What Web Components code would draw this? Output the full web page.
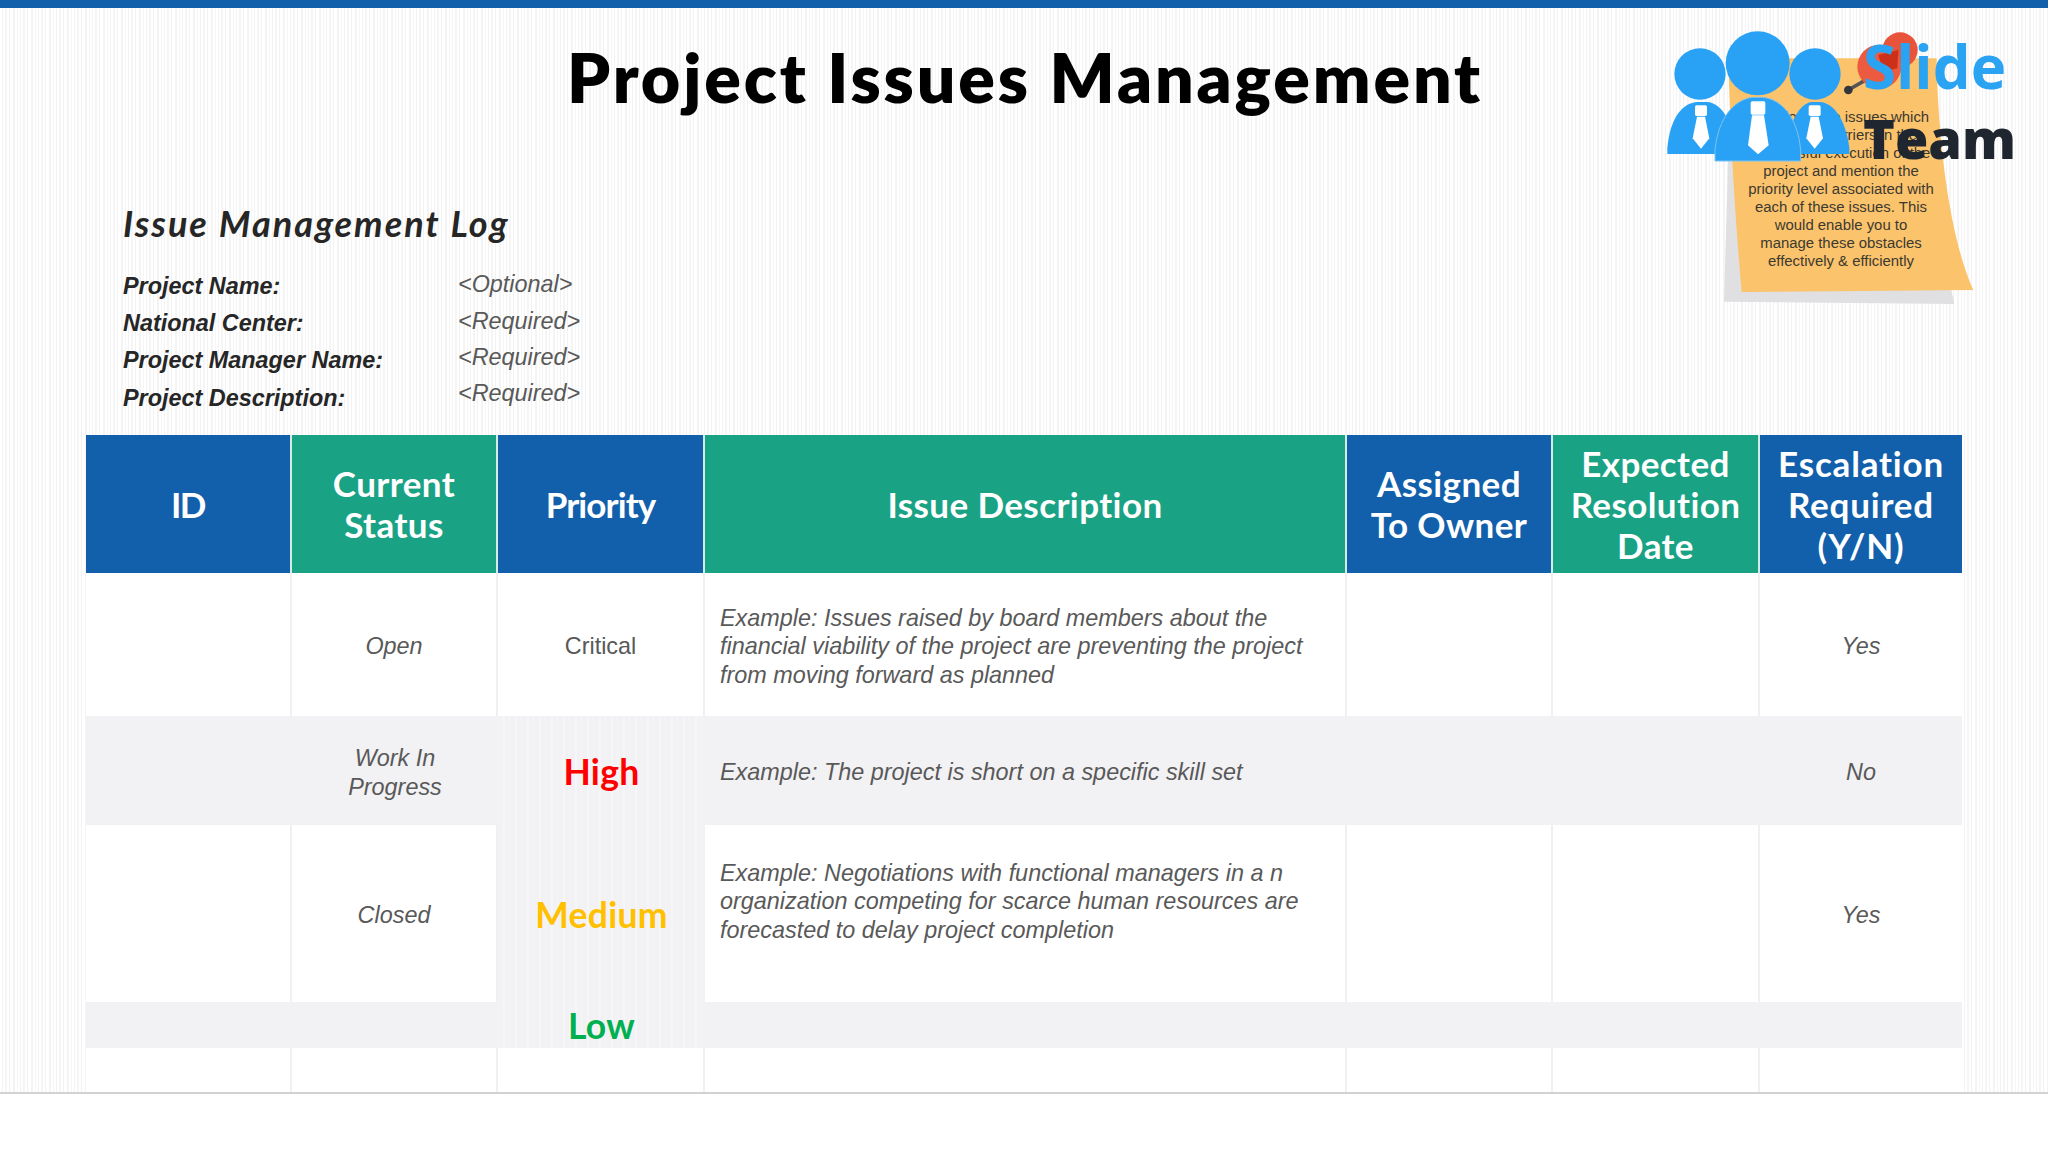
<!DOCTYPE html>
<html lang="en">
<head>
<meta charset="utf-8">
<title>Project Issues Management</title>
<style>
  html,body{margin:0;padding:0;background:#fff}
  body{width:2048px;height:1152px;overflow:hidden;font-family:"Liberation Sans",sans-serif}
</style>
</head>
<body>
<issue-slide>
  <slide-title>Project Issues Management</slide-title>
  <log-info heading="Issue Management Log">
    <info-row label="Project Name:" off="-4">&lt;Optional&gt;</info-row>
    <info-row label="National Center:" off="-4">&lt;Required&gt;</info-row>
    <info-row label="Project Manager Name:" off="-6.6">&lt;Required&gt;</info-row>
    <info-row label="Project Description:" off="-9.2">&lt;Required&gt;</info-row>
  </log-info>
  <issue-table>
    <t-cell kind="hb" ls="-1.6">ID</t-cell>
    <t-cell kind="ht">Current<br>Status</t-cell>
    <t-cell kind="hb" ls="-.9">Priority</t-cell>
    <t-cell kind="ht">Issue Description</t-cell>
    <t-cell kind="hb">Assigned<br>To Owner</t-cell>
    <t-cell kind="ht">Expected<br>Resolution<br>Date</t-cell>
    <t-cell kind="hb" last ls=".8">Escalation<br>Required<br>(Y/N)</t-cell>

    <t-cell kind="w"></t-cell>
    <t-cell kind="w" em>Open</t-cell>
    <t-cell kind="w">Critical</t-cell>
    <t-cell kind="w" em desc>Example: Issues raised by board members about the<br>financial viability of the project are preventing the project<br>from moving forward as planned</t-cell>
    <t-cell kind="w"></t-cell>
    <t-cell kind="w"></t-cell>
    <t-cell kind="w" em last>Yes</t-cell>

    <t-cell kind="g"></t-cell>
    <t-cell kind="g" em>Work In<br>Progress</t-cell>
    <t-cell kind="gs" pri="#ff0000">High</t-cell>
    <t-cell kind="g" em desc>Example: The project is short on a specific skill set</t-cell>
    <t-cell kind="g"></t-cell>
    <t-cell kind="g"></t-cell>
    <t-cell kind="g" em last>No</t-cell>

    <t-cell kind="w"></t-cell>
    <t-cell kind="w" em>Closed</t-cell>
    <t-cell kind="gs" pri="#ffc000">Medium</t-cell>
    <t-cell kind="w" em desc top>Example: Negotiations with functional managers in a n<br>organization competing for scarce human resources are<br>forecasted to delay project completion</t-cell>
    <t-cell kind="w"></t-cell>
    <t-cell kind="w"></t-cell>
    <t-cell kind="w" em last>Yes</t-cell>

    <t-cell kind="g"></t-cell>
    <t-cell kind="g"></t-cell>
    <t-cell kind="gs" pri="#00b050">Low</t-cell>
    <t-cell kind="g"></t-cell>
    <t-cell kind="g"></t-cell>
    <t-cell kind="g"></t-cell>
    <t-cell kind="g" last></t-cell>

    <t-cell kind="w"></t-cell>
    <t-cell kind="w"></t-cell>
    <t-cell kind="w"></t-cell>
    <t-cell kind="w"></t-cell>
    <t-cell kind="w"></t-cell>
    <t-cell kind="w"></t-cell>
    <t-cell kind="w" last></t-cell>
  </issue-table>
  <brand-note></brand-note>
</issue-slide>

<script>
const STRIPES = 'repeating-linear-gradient(90deg,#fff 0 2px,#f3f3f3 2px 3px,#fff 3px 5px,#f5f5f5 5px 7px,#fff 7px 9px,#f2f2f2 9px 10px,#fff 10px 13px,#f4f4f4 13px 15px,#fff 15px 17px,#f6f6f6 17px 18px)';

function shadow(el, html){
  el.attachShadow({mode:'open'}).innerHTML = html;
  return el.shadowRoot;
}

customElements.define('issue-slide', class extends HTMLElement{
  connectedCallback(){
    if(this.shadowRoot) return;
    shadow(this, `<style>
      :host{display:block;position:relative;width:2048px;height:1152px;background:#fff;color:#000;font-family:"Liberation Sans",sans-serif}
      .bar{height:8px;background:#1260ab}
      .page{height:1086px;box-sizing:border-box;border-bottom:2px solid #d2d2d4;background:${STRIPES};display:flex;flex-direction:column}
    </style>
    <div class="bar"></div>
    <div class="page"><slot></slot></div>`);
  }
});

customElements.define('slide-title', class extends HTMLElement{
  connectedCallback(){
    if(this.shadowRoot) return;
    shadow(this, `<style>
      :host{display:block;height:132px;box-sizing:border-box;padding:29px 0 0 2px;text-align:center;
        font:800 68px/80px Lato,sans-serif;letter-spacing:2.85px;color:#000}
    </style><slot></slot>`);
  }
});

customElements.define('log-info', class extends HTMLElement{
  connectedCallback(){
    if(this.shadowRoot) return;
    shadow(this, `<style>
      :host{display:block;height:295px;box-sizing:border-box;padding:58px 0 0 123px}
      h2{margin:0 0 19px;font:italic 700 36px/50px Lato,sans-serif;letter-spacing:2px;color:#262626}
      .rows{display:flex;flex-direction:column;gap:0}
    </style><h2></h2><div class="rows"><slot></slot></div>`);
    this.shadowRoot.querySelector('h2').textContent = this.getAttribute('heading');
  }
});

customElements.define('info-row', class extends HTMLElement{
  connectedCallback(){
    if(this.shadowRoot) return;
    const off = this.getAttribute('off') || '-4';
    shadow(this, `<style>
      :host{display:grid;grid-template-columns:335px auto;height:37.3px;align-items:center}
      b{font:italic 700 23.4px/30px "Liberation Sans",sans-serif;color:#262626}
      span{font:italic 400 23.4px/30px "Liberation Sans",sans-serif;color:#595959;margin-top:${off}px}
    </style><b></b><span><slot></slot></span>`);
    this.shadowRoot.querySelector('b').textContent = this.getAttribute('label');
  }
});

customElements.define('issue-table', class extends HTMLElement{
  connectedCallback(){
    if(this.shadowRoot) return;
    shadow(this, `<style>
      :host{display:block;margin-left:86px;width:1876px}
      .grid{display:grid;grid-template-columns:206px 206px 207px 642px 206px 207px 202px;grid-template-rows:138px 143px 109px 177px 46px 44px}
    </style><div class="grid"><slot></slot></div>`);
  }
});

customElements.define('t-cell', class extends HTMLElement{
  connectedCallback(){
    if(this.shadowRoot) return;
    const k = this.getAttribute('kind');
    const last = this.hasAttribute('last');
    const desc = this.hasAttribute('desc');
    const top = this.hasAttribute('top');
    const pri = this.getAttribute('pri');
    const em = this.hasAttribute('em');
    const ls = this.getAttribute('ls');
    let bg = '#fff', border = '', font = '23.4px/28.3px "Liberation Sans",sans-serif', color = '#595959', extra = '', pad = top ? '34px' : '4px';
    if(k === 'hb' || k === 'ht'){
      bg = k === 'hb' ? '#1260ab' : '#1aa285';
      font = '700 35px/41px Lato,sans-serif';
      color = '#fff';
      extra = `letter-spacing:${ls || '.4'}px;`;
      pad = '0';
      if(!last) border = 'border-right:2px solid #d5ebe6;';
    } else if(k === 'w'){
      if(!last) border = 'border-right:2px solid #f0eff3;';
    } else if(k === 'g'){
      bg = '#f2f1f4';
    } else if(k === 'gs'){
      bg = 'repeating-linear-gradient(90deg,#f2f1f4 0 5px,#f6f5f7 5px 7px,#f2f1f4 7px 11px,#f5f4f6 11px 12px)';
    }
    if(pri){ font = '700 35.5px/36px Lato,sans-serif'; color = pri; extra = 'letter-spacing:.3px;'; pad = '2px'; }
    if(em) font = 'italic ' + font;
    shadow(this, `<style>
      :host{display:flex;box-sizing:border-box;min-width:0;align-items:${top ? 'flex-start' : 'center'};
        justify-content:${desc ? 'flex-start' : 'center'};text-align:${desc ? 'left' : 'center'};
        background:${bg};${border}font:${font};color:${color};${extra}
        padding:${pad} 0 0 ${desc ? '15px' : '0'};white-space:nowrap;overflow:visible}
    </style><div><slot></slot></div>`);
  }
});

customElements.define('brand-note', class extends HTMLElement{
  connectedCallback(){
    if(this.shadowRoot) return;
    shadow(this, `<style>
      :host{position:absolute;left:1620px;top:0;width:428px;height:320px;pointer-events:none}
      svg{position:absolute;left:0;top:0;width:428px;height:320px}
      .note{position:absolute;left:60px;top:108px;width:322px;text-align:center;
        font:14.9px/18px "Liberation Sans",sans-serif;color:#3b3a32;white-space:nowrap}
      .slide,.team{position:absolute;left:243px;font-family:"Open Sans",sans-serif;white-space:nowrap}
      .slide{top:26px;font-weight:700;font-size:60px;line-height:80px;color:#2ba3f3}
      .team{top:101px;font-weight:800;font-size:54px;line-height:74px;color:#1f2630}
    </style>
    <svg viewBox="0 0 1284 960" aria-hidden="true">
      <path d="M325 450 L312 905 L1003 912 L985 830 Z" fill="#e0e0e2"/>
      <path d="M325 175 L950 175 C955 480 1000 740 1060 870 L365 876 C345 650 330 400 325 175 Z" fill="#fbc36b"/>
      <path d="M685 270 L740 238" stroke="#555" stroke-width="11" stroke-linecap="round"/>
      <circle cx="685" cy="270" r="13" fill="#33363a"/>
      <circle cx="840" cy="150" r="53" fill="#e8533c"/>
      <circle cx="778" cy="200" r="66" fill="#ec5a40"/>
      <path d="M775 165 L835 150 L832 205 L790 215 Z" fill="#cd3018"/>
    </svg>
    <div class="note">List down the issues which<br>might be barriers in the<br>successful execution of the<br>project and mention the<br>priority level associated with<br>each of these issues. This<br>would enable you to<br>manage these obstacles<br>effectively &amp; efficiently</div>
    <svg viewBox="0 0 1284 960" aria-hidden="true">
      <g fill="#29a2f5">
        <circle cx="240" cy="222" r="77"/>
        <circle cx="585" cy="222" r="77"/>
        <path d="M142 462 V445 C150 350 190 308 232 306 H262 C305 308 340 370 345 445 V462 Z"/>
        <path d="M500 462 V445 C505 370 540 308 575 306 H600 C645 308 680 370 688 445 V462 Z"/>
      </g>
      <g fill="#fff">
        <rect x="225" y="316" width="36" height="32" rx="5"/>
        <path d="M231 350 H255 L268 415 L243 446 L218 415 Z"/>
        <rect x="566" y="316" width="36" height="32" rx="5"/>
        <path d="M572 350 H596 L609 415 L584 446 L559 415 Z"/>
      </g>
      <circle cx="413" cy="190" r="96" fill="#29a2f5"/>
      <path d="M285 483 V450 C295 350 345 298 398 292 H428 C485 298 532 350 542 450 V483 Z" fill="#29a2f5" stroke="#7cc3ee" stroke-width="3"/>
      <g fill="#fff">
        <rect x="392" y="304" width="44" height="40" rx="5"/>
        <path d="M396 346 H432 L446 436 L414 463 L384 436 Z"/>
      </g>
    </svg>
    <span class="slide">Slide</span>
    <span class="team">Team</span>`);
  }
});
</script>
</body>
</html>
